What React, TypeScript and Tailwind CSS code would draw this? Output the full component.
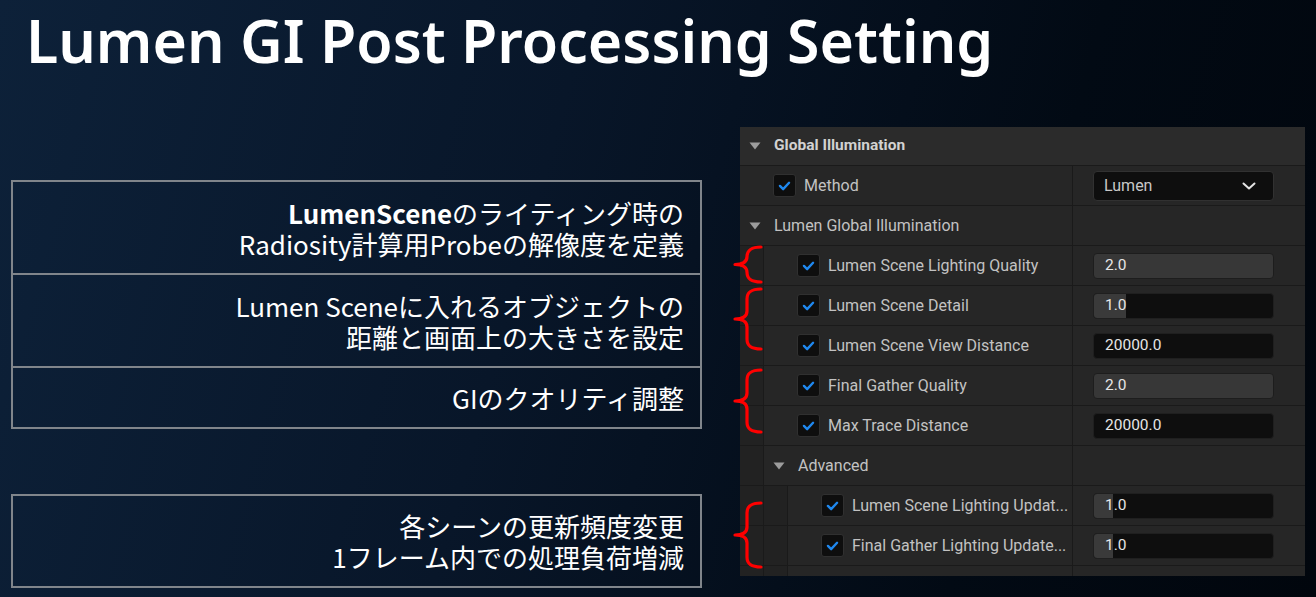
import React from "react";

function Check() {
  return (
    <div className="w-[23px] h-[23px] shrink-0 rounded-[3px] bg-[#0e0e0e] border border-[#303030] flex items-center justify-center">
      <svg width="23" height="23" viewBox="0 0 23 23" fill="none">
        <path d="M6.5 12 L10 15.5 L16.5 8.5" stroke="#1f88ef" strokeWidth={2.6} strokeLinecap="round" strokeLinejoin="round" />
      </svg>
    </div>
  );
}

function Tri() {
  return (
    <svg width="12" height="8" viewBox="0 0 12 8" className="shrink-0">
      <path d="M0.5 0.5 L11.5 0.5 L6 7.5 Z" fill="#9c9c9c" />
    </svg>
  );
}

function Strips({ depth }: { depth: number }) {
  const list = [];
  for (let i = 0; i < depth; i++) {
    list.push(<div key={i} className="w-[24px] h-full shrink-0 bg-[#222222] border-r border-[#1a1a1a]" />);
  }
  return <>{list}</>;
}

function ValueBox({ value, kind, fill }: { value: string; kind: "light" | "dark"; fill?: number }) {
  return (
    <div
      className={
        "relative w-[181px] h-[26px] rounded-[4px] border overflow-hidden flex items-center " +
        (kind === "light" ? "bg-[#373737] border-[#1d1d1d]" : "bg-[#0e0e0e] border-[#1f1f1f]")
      }
    >
      {fill ? <div className="absolute left-0 top-0 h-full bg-[#3a3a3a]" style={{ width: fill }} /> : null}
      <span className="relative pl-[11px] text-[15.5px] text-[#e6e6e6]">{value}</span>
    </div>
  );
}

function Row({ depth, label, children }: { depth: number; label: string; children?: React.ReactNode }) {
  return (
    <div className="flex h-[40px] border-t border-[#1a1a1a]">
      <Strips depth={depth} />
      <div className="flex-1 flex items-center gap-[8px] pl-[33px] min-w-0">
        <Check />
        <span className="text-[16px] text-[#c2c2c2] whitespace-nowrap">{label}</span>
      </div>
      <div className="w-[233px] shrink-0 border-l border-[#1a1a1a] pl-[20px] flex items-center">{children}</div>
    </div>
  );
}

function GroupRow({ depth, label }: { depth: number; label: string }) {
  return (
    <div className="flex h-[40px] border-t border-[#1a1a1a]">
      <Strips depth={depth} />
      <div className="flex-1 flex items-center gap-[13px] pl-[9px]">
        <Tri />
        <span className="text-[16px] text-[#c2c2c2]">{label}</span>
      </div>
      <div className="w-[233px] shrink-0 border-l border-[#1a1a1a]" />
    </div>
  );
}

function Brace({ top, height }: { top: number; height: number }) {
  const h = height;
  const m = h / 2;
  const d = `M29 2 C19 2 15 5 15 12 L15 ${m - 8} C15 ${m - 3} 11 ${m} 3 ${m} C11 ${m} 15 ${m + 3} 15 ${m + 8} L15 ${h - 12} C15 ${h - 5} 19 ${h - 2} 29 ${h - 2}`;
  return (
    <svg
      className="absolute left-[732px]"
      style={{ top }}
      width="32"
      height={h}
      viewBox={`0 0 32 ${h}`}
      fill="none"
    >
      <path d={d} stroke="#ff0000" strokeWidth={3.2} strokeLinecap="round" strokeLinejoin="round" />
    </svg>
  );
}

export default function App() {
  return (
    <div className="relative w-[1316px] h-[597px] overflow-hidden bg-[linear-gradient(105deg,#0d2139_0%,#081629_40%,#020a14_75%,#01060d_100%)]">
      <div className="pt-[11px] pl-[26px] h-[70px]">
        <h1 className="text-[59px] leading-[59px] font-semibold text-white font-['Noto_Sans',sans-serif] whitespace-nowrap">
          Lumen GI Post Processing Setting
        </h1>
      </div>

      <div className="flex items-start">
        {/* explanation boxes */}
        <div className="ml-[11px] w-[691px] mt-[110px] flex flex-col gap-[65px] text-white text-[26px] leading-[31px] font-['Noto_Sans_CJK_JP',sans-serif]">
          <div className="flex flex-col border-2 border-[#80858b] divide-y-2 divide-[#80858b]">
            <div className="h-[93px] flex flex-col justify-center items-end pr-[16px]">
              <div>
                <span className="font-bold">LumenScene</span>のライティング時の
              </div>
              <div>Radiosity計算用Probeの解像度を定義</div>
            </div>
            <div className="h-[93px] flex flex-col justify-center items-end pr-[16px]">
              <div>Lumen Sceneに入れるオブジェクトの</div>
              <div>距離と画面上の大きさを設定</div>
            </div>
            <div className="h-[59px] flex flex-col justify-center items-end pr-[16px]">
              <div>GIのクオリティ調整</div>
            </div>
          </div>
          <div className="h-[94px] border-2 border-[#80858b] flex flex-col justify-center items-end pr-[16px]">
            <div>各シーンの更新頻度変更</div>
            <div>1フレーム内での処理負荷増減</div>
          </div>
        </div>

        {/* details panel */}
        <div className="ml-[38px] mt-[57px] w-[565px] bg-[#262626] font-['Roboto',sans-serif]">
          <div className="h-[38px] flex items-center gap-[13px] pl-[9px] bg-[#2b2b2b]">
            <Tri />
            <span className="text-[15.5px] font-bold text-[#d2d2d2]">Global Illumination</span>
          </div>
          <div className="flex h-[40px] border-t border-[#1a1a1a]">
            <div className="flex-1 flex items-center gap-[8px] pl-[33px]">
              <Check />
              <span className="text-[16px] text-[#c2c2c2]">Method</span>
            </div>
            <div className="w-[233px] shrink-0 border-l border-[#1a1a1a] pl-[20px] flex items-center">
              <div className="w-[181px] h-[30px] rounded-[4px] bg-[#0e0e0e] border border-[#313131] flex items-center justify-between pl-[10px] pr-[17px]">
                <span className="text-[16px] text-[#c8c8c8]">Lumen</span>
                <svg width="14" height="8" viewBox="0 0 14 8" fill="none">
                  <path d="M1.5 1.5 L7 6.5 L12.5 1.5" stroke="#e4e4e4" strokeWidth={2} strokeLinecap="round" strokeLinejoin="round" />
                </svg>
              </div>
            </div>
          </div>
          <GroupRow depth={0} label="Lumen Global Illumination" />
          <Row depth={1} label="Lumen Scene Lighting Quality">
            <ValueBox value="2.0" kind="light" />
          </Row>
          <Row depth={1} label="Lumen Scene Detail">
            <ValueBox value="1.0" kind="dark" fill={32} />
          </Row>
          <Row depth={1} label="Lumen Scene View Distance">
            <ValueBox value="20000.0" kind="dark" />
          </Row>
          <Row depth={1} label="Final Gather Quality">
            <ValueBox value="2.0" kind="light" />
          </Row>
          <Row depth={1} label="Max Trace Distance">
            <ValueBox value="20000.0" kind="dark" />
          </Row>
          <GroupRow depth={1} label="Advanced" />
          <Row depth={2} label="Lumen Scene Lighting Updat...">
            <ValueBox value="1.0" kind="dark" fill={19} />
          </Row>
          <Row depth={2} label="Final Gather Lighting Update...">
            <ValueBox value="1.0" kind="dark" fill={19} />
          </Row>
          <div className="flex h-[11px] border-t border-[#1a1a1a]">
            <Strips depth={2} />
            <div className="flex-1" />
            <div className="w-[233px] shrink-0 border-l border-[#1a1a1a]" />
          </div>
        </div>
      </div>

      {/* red braces */}
      <Brace top={245} height={39} />
      <Brace top={287} height={64} />
      <Brace top={368} height={66} />
      <Brace top={501} height={68} />
    </div>
  );
}
